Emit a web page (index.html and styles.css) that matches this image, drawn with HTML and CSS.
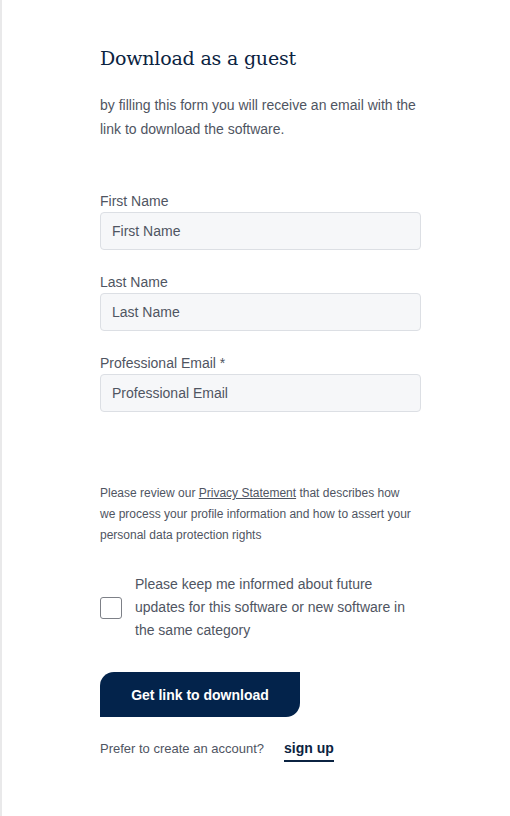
FILE: index.html
```html
<!DOCTYPE html>
<html lang="en">
<head>
<meta charset="utf-8">
<title>Download as a guest</title>
<link rel="stylesheet" href="styles.css">
</head>
<body>
<main class="page">
  <h1 class="title">Download as a guest</h1>
  <p class="intro">by filling this form you will receive an email with the link to download the software.</p>

  <form class="form">
    <div class="field">
      <label class="label" for="fn">First Name</label>
      <input class="input" id="fn" type="text" placeholder="First Name">
    </div>
    <div class="field">
      <label class="label" for="ln">Last Name</label>
      <input class="input" id="ln" type="text" placeholder="Last Name">
    </div>
    <div class="field">
      <label class="label" for="em">Professional Email *</label>
      <input class="input" id="em" type="email" placeholder="Professional Email">
    </div>

    <p class="privacy">Please review our <a class="privacy-link" href="#">Privacy Statement</a> that describes how we process your profile information and how to assert your personal data protection rights</p>

    <label class="consent">
      <span class="box"></span>
      <span class="consent-text">Please keep me informed about future updates for this software or new software in the same category</span>
    </label>

    <button class="submit" type="button">Get link to download</button>

    <div class="account">
      <span class="account-text">Prefer to create an account?</span>
      <a class="signup" href="#">sign up</a>
    </div>
  </form>
</main>
</body>
</html>
```
FILE: styles.css
```css
html, body {
  margin: 0;
  padding: 0;
  background: #ffffff;
}
body {
  font-family: "Liberation Sans", Arial, sans-serif;
  color: #4f5562;
}
.page {
  min-height: 816px;
  box-sizing: border-box;
  border-left: 2px solid #e9e9ea;
  padding: 44px 0 0 98px;
  width: 510px;
}
.title {
  margin: 0;
  font-family: "DejaVu Serif", "Liberation Serif", serif;
  font-weight: normal;
  font-size: 19px;
  line-height: 28px;
  color: #0b2341;
  letter-spacing: -0.2px;
}
.intro {
  margin: 21px 0 0;
  width: 321px;
  font-size: 14px;
  line-height: 24px;
}
.form {
  width: 321px;
  margin-top: 50px;
  display: flex;
  flex-direction: column;
}
.field {
  display: flex;
  flex-direction: column;
  margin-bottom: 22px;
}
.label {
  font-size: 14px;
  line-height: 20px;
  margin-bottom: 1px;
  color: #4f5562;
}
.input {
  box-sizing: border-box;
  height: 38px;
  width: 321px;
  border: 1px solid #dcdfe4;
  border-radius: 4px;
  background: #f6f7f9;
  padding: 0 11px;
  font-family: "Liberation Sans", Arial, sans-serif;
  font-size: 14px;
  color: #4f5562;
  outline: none;
}
.input::placeholder {
  color: #4f5562;
  opacity: 1;
}
.privacy {
  margin: 49px 0 0;
  width: 316px;
  font-size: 12px;
  line-height: 21px;
  color: #4f5562;
}
.privacy-link {
  color: #4f5562;
  text-decoration: underline;
}
.consent {
  margin-top: 27px;
  display: flex;
  align-items: center;
  gap: 13px;
}
.box {
  flex: none;
  width: 22px;
  height: 22px;
  box-sizing: border-box;
  border: 1px solid #7d8087;
  border-radius: 3px;
  background: #fff;
}
.consent-text {
  font-size: 14px;
  line-height: 23px;
  width: 280px;
}
.submit {
  margin-top: 30px;
  width: 200px;
  height: 45px;
  border: none;
  background: #03234b;
  color: #ffffff;
  font-family: "Liberation Sans", Arial, sans-serif;
  font-weight: bold;
  font-size: 14px;
  border-radius: 14px 0 14px 0;
  cursor: pointer;
}
.account {
  margin-top: 23px;
  display: flex;
  align-items: baseline;
  gap: 20px;
}
.account-text {
  font-size: 13px;
  line-height: 18px;
}
.signup {
  font-size: 14px;
  font-weight: bold;
  color: #0b2341;
  text-decoration: none;
  border-bottom: 2px solid #0b2341;
  padding-bottom: 4px;
}
```
